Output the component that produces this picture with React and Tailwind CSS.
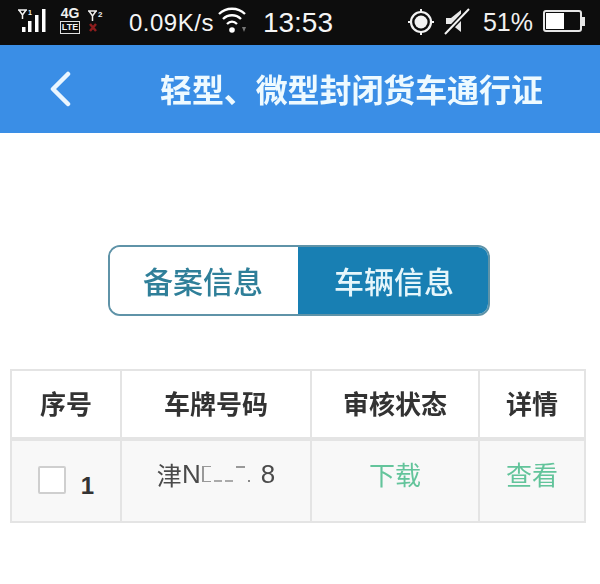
const cjk = { fontFamily: '"Noto Sans CJK SC", "Liberation Sans", sans-serif' };
const latin = { fontFamily: '"Liberation Sans", Arial, sans-serif' };

function Signal1() {
  return (
    <svg width="33" height="33" viewBox="0 0 33 33" className="block shrink-0">
      <path d="M1 10h9M2 10l3.500 5 3.500-5M5.500 14v5" stroke="#f4f4f4" strokeWidth="1.500" fill="none" />
      <text x="11" y="15" fontSize="7" fontWeight="700" fill="#f4f4f4" style={latin}>1</text>
      <rect x="5" y="27" width="3.500" height="5" fill="#fff" />
      <rect x="11" y="21" width="3.500" height="11" fill="#fff" />
      <rect x="18" y="15" width="3.500" height="17" fill="#fff" />
      <rect x="25" y="9" width="3.500" height="23" fill="#fff" />
    </svg>
  );
}

function Signal2() {
  return (
    <svg width="22" height="28" viewBox="0 0 22 28" className="block shrink-0">
      <path d="M1 3h9M2 3l3.500 5 3.500-5M5.500 7v6" stroke="#eee" strokeWidth="1.500" fill="none" />
      <text x="11" y="9" fontSize="8" fontWeight="700" fill="#eee" style={latin}>2</text>
      <path d="M3 16l6 7M9 16l-6 7" stroke="#8d1d1d" strokeWidth="2.500" />
    </svg>
  );
}

function Wifi() {
  return (
    <svg width="30" height="28" viewBox="0 0 30 28" className="block shrink-0">
      <path d="M1 9C8 2 20 2 27 9M5 14C10 9 18 9 23 14M9 19c3-3 7-3 10 0" stroke="#fff" strokeWidth="2.300" fill="none" />
      <circle cx="14" cy="25" r="2.800" fill="#fff" />
      <path d="M24 22h4l-2 5z" fill="#777" />
    </svg>
  );
}

function Target() {
  return (
    <svg width="28" height="28" viewBox="0 0 28 28" className="block shrink-0">
      <circle cx="14" cy="14" r="10" stroke="#f2f2f2" strokeWidth="2.200" fill="none" />
      <circle cx="14" cy="14" r="6.500" fill="#f2f2f2" />
      <path d="M14 1v3M14 24v3M1 14h3M24 14h3" stroke="#f2f2f2" strokeWidth="2" />
    </svg>
  );
}

function Muted() {
  return (
    <svg width="28" height="28" viewBox="0 0 28 28" className="block shrink-0">
      <path d="M3 11h5l10-8v22l-10-8H3z" fill="#e8e8e8" />
      <path d="M2 27L26 2" stroke="#0c0c0c" strokeWidth="5" />
      <path d="M2 27L26 2" stroke="#f4f4f4" strokeWidth="2" />
    </svg>
  );
}

function Battery() {
  return (
    <div className="flex items-center shrink-0">
      <div className="w-[39px] h-[22px] rounded-[3px] border-2 border-[#e6e6e6] p-px">
        <div className="w-[18px] h-full bg-white" />
      </div>
      <div className="w-[3px] h-[9px] bg-[#e6e6e6]" />
    </div>
  );
}

function Cell({ className = "", children }) {
  return <div className={`flex items-center justify-center ${className}`}>{children}</div>;
}

function Plate() {
  return (
    <span className="flex items-center text-[25px] leading-none text-[#4a4a4a] blur-[0.4px]" style={cjk}>
      津
      <span className="text-[26px]" style={latin}>N</span>
      <span className="flex items-center w-[59px] h-[20px] gap-[3px] ml-px">
        <span className="w-[9px] h-[16px] border-l-2 border-t border-b border-[#999]" />
        <span className="w-[8px] h-[3px] self-end mb-[2px] border-b-2 border-[#aaa]" />
        <span className="w-[8px] h-[3px] self-end mb-[2px] border-b-2 border-[#aaa]" />
        <span className="w-[9px] h-[2px] self-start mt-[2px] bg-[#999]" />
        <span className="w-[2px] h-[2px] self-end mb-[2px] bg-[#888]" />
      </span>
      <span className="text-[26px]" style={latin}>8</span>
    </span>
  );
}

export default function App() {
  return (
    <div className="w-[600px] h-[584px] bg-white flex flex-col overflow-hidden" style={cjk}>
      <div className="h-[45px] bg-[#0d0d0d] flex items-center pl-[17px] text-white shrink-0" style={latin}>
        <div className="self-start"><Signal1 /></div>
        <div className="flex flex-col items-center ml-[9px] w-[22px] mb-[6px] text-[#f0f0f0]">
          <span className="text-[14px] font-bold leading-[15px]">4G</span>
          <span className="text-[9px] leading-[11px] font-bold border border-[#e0e0e0] px-px">LTE</span>
        </div>
        <div className="ml-[6px] self-start mt-[8px]"><Signal2 /></div>
        <span className="ml-[20px] text-[24px] leading-none tracking-[0.5px] text-[#f5f5f5]">0.09K/s</span>
        <div className="ml-[4px] self-start mt-[5px]"><Wifi /></div>
        <span className="ml-[15px] text-[28px] leading-none text-[#f5f5f5]">13:53</span>
        <div className="ml-[74px] mb-[2px]"><Target /></div>
        <div className="ml-[8px] mb-[3px]"><Muted /></div>
        <span className="ml-[12px] text-[25px] leading-none text-[#f0f0f0]">51%</span>
        <div className="ml-[10px] mb-[3px]"><Battery /></div>
      </div>

      <div className="h-[88px] bg-[#3a8ee6] flex items-center shrink-0">
        <svg width="24" height="36" viewBox="0 0 24 36" className="block ml-[48px] shrink-0">
          <path d="M20 3L5 18l15 15" stroke="#eaf6ff" strokeWidth="4.500" strokeLinecap="round" strokeLinejoin="round" fill="none" />
        </svg>
        <span className="ml-[88px] text-[32px] leading-none font-bold text-[#eefaff] whitespace-nowrap blur-[0.4px] tracking-[-0.1px] mb-[3px]">
          轻型、微型封闭货车通行证
        </span>
      </div>

      <div className="flex justify-center mt-[112px] pr-[2px]">
        <div className="w-[382px] h-[71px] flex rounded-[12px] border-2 border-[#5f93a8] overflow-hidden">
          <div className="w-[188px] bg-white flex items-center justify-center text-[30px] font-medium text-[#2f7f99] blur-[0.3px] pr-[2px]">备案信息</div>
          <div className="flex-1 bg-[#187fb3] flex items-center justify-center text-[30px] font-medium text-[#e6f6fb] blur-[0.3px] pl-[2px]">车辆信息</div>
        </div>
      </div>

      <div className="mx-[10px] mt-[53px] w-[576px] border-2 border-[#e4e4e4] grid grid-cols-[110px_190px_168px_1fr] grid-rows-[70px_80px] text-[26px]">
        <Cell className="border-r-2 border-b-4 border-[#e4e4e4] font-bold text-[#333] blur-[0.3px] pb-[3px]">序号</Cell>
        <Cell className="border-r-2 border-b-4 border-[#e4e4e4] font-bold text-[#333] blur-[0.3px] pb-[3px]">车牌号码</Cell>
        <Cell className="border-r-2 border-b-4 border-[#e4e4e4] font-bold text-[#333] blur-[0.3px] pb-[3px]">审核状态</Cell>
        <Cell className="border-b-4 border-[#e4e4e4] font-bold text-[#333] blur-[0.3px] pb-[3px]">详情</Cell>

        <Cell className="border-r-2 border-[#e4e4e4] bg-[#f8f8f8] gap-[15px] pb-[2px]">
          <span className="w-[28px] h-[28px] rounded-[2px] border-2 border-[#cfcfcf] bg-white" />
          <span className="text-[24px] font-bold leading-none text-[#333] mt-[12px]" style={latin}>1</span>
        </Cell>
        <Cell className="border-r-2 border-[#e4e4e4] bg-[#f8f8f8] pb-[14px]"><Plate /></Cell>
        <Cell className="border-r-2 border-[#e4e4e4] bg-[#f8f8f8] pb-[16px] text-[#63c49b] blur-[0.3px]">下载</Cell>
        <Cell className="bg-[#f8f8f8] pb-[16px] text-[#63c49b] blur-[0.3px]">查看</Cell>
      </div>
    </div>
  );
}
